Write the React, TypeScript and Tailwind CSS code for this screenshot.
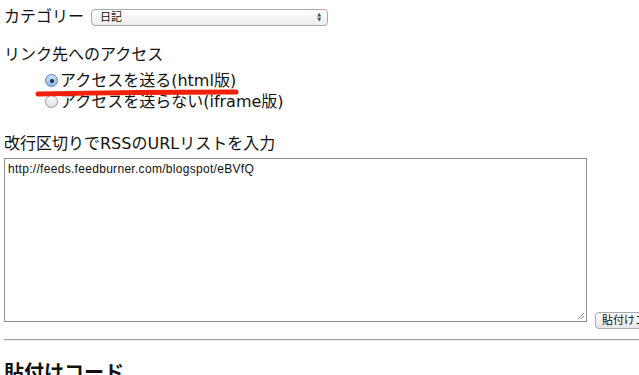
const jp = "font-['DejaVu_Sans','Noto_Sans_CJK_JP',sans-serif]";

const Radio = ({ checked }: { checked?: boolean }) => (
  <span
    className={`inline-flex items-center justify-center w-[13px] h-[13px] rounded-full border mr-[2px] shrink-0 ${
      checked
        ? "border-[#5a7fb5] bg-gradient-to-b from-[#cfe2f7] to-[#8fb6e6]"
        : "border-[#9a9a9a] bg-gradient-to-b from-white to-[#e2e2e2]"
    }`}
  >
    {checked && <span className="w-[4px] h-[4px] rounded-full bg-[#1b2c44]" />}
  </span>
);

const App = () => {
  return (
    <div className={`relative w-[639px] h-[375px] overflow-hidden bg-white text-[#111] ${jp}`}>
      <div className="pl-[4px] pt-[6px]">
        <div className="flex items-center h-[22px]">
          <span className="text-[16px] leading-[20px]">カテゴリー</span>
          <div className="ml-[7px] w-[237px] h-[17px] flex items-center justify-between rounded-[4px] border border-[#a9a9a9] bg-gradient-to-b from-white to-[#ededed] pl-[8px] pr-[6px]">
            <span className="text-[11px] leading-none">日記</span>
            <span className="flex flex-col items-center leading-none text-[5px] text-[#444]">
              <span>▲</span>
              <span>▼</span>
            </span>
          </div>
        </div>

        <p className="mt-[17px] text-[16px] leading-[20px]">リンク先へのアクセス</p>

        <div className="pl-[41px] mt-[5px] flex flex-col">
          <label className="flex items-center h-[21px] text-[16px]">
            <Radio checked />
            <span>アクセスを送る(html版)</span>
          </label>
          <label className="flex items-center h-[21px] text-[16px]">
            <Radio />
            <span>アクセスを送らない(iframe版)</span>
          </label>
        </div>

        <p className="mt-[22px] text-[16px] leading-[20px]">改行区切りでRSSのURLリストを入力</p>

        <div className="flex items-end mt-[4px]">
          <div className="shrink-0 w-[583px] h-[164px] border border-[#8e8e8e] px-[3px] pt-[3px] relative">
            <div className="font-['Liberation_Sans',sans-serif] text-[12px] leading-[14px] tracking-[0.3px]">
              http://feeds.feedburner.com/blogspot/eBVfQ
            </div>
            <svg className="absolute right-[1px] bottom-[1px]" width="8" height="8" viewBox="0 0 8 8">
              <path d="M7 1 L1 7 M7 4 L4 7" stroke="#888" strokeWidth="1" />
            </svg>
          </div>
          <button className="shrink-0 ml-[8px] h-[17px] rounded-[4px] border border-[#a9a9a9] bg-gradient-to-b from-white to-[#e6e6e6] px-[6px] text-[11px] leading-none whitespace-nowrap mb-[-7px]">
            貼付けコード生成
          </button>
        </div>

        <div className="mt-[17px] h-[2px] border-t border-[#9a9a9a] bg-[#eee] w-[635px]" />

        <h2 className="mt-[18px] text-[20px] font-bold leading-[28px]">貼付けコード</h2>
      </div>

      <svg className="absolute left-0 top-0 pointer-events-none" width="639" height="375">
        <path d="M38 94 Q 140 92 236 92" stroke="#f0200a" strokeWidth="5" strokeLinecap="round" fill="none" />
      </svg>
    </div>
  );
};

export default App;
